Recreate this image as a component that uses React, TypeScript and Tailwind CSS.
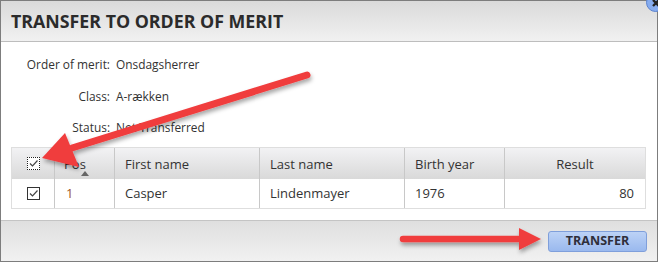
import React from 'react';

const rows = [{ pos: '1', first: 'Casper', last: 'Lindenmayer', year: '1976', result: '80' }];

function Check({ dotted }: { dotted?: boolean }) {
  return (
    <span
      className={
        'relative inline-flex h-[13px] w-[13px] items-center justify-center bg-white ' +
        (dotted ? 'border border-dotted border-[#222]' : 'border border-[#333]')
      }
    >
      <svg width="11" height="11" viewBox="0 0 11 11">
        <path d="M2 5.5 L4.5 8 L9.5 2.5" fill="none" stroke="#444" strokeWidth="1.2" />
      </svg>
    </span>
  );
}

function Arrows() {
  return (
    <svg className="pointer-events-none absolute left-0 top-0" width="658" height="262">
      <defs>
        <filter id="sh" x="-20%" y="-20%" width="140%" height="140%">
          <feDropShadow dx="1" dy="3" stdDeviation="2" floodColor="#000" floodOpacity="0.35" />
        </filter>
      </defs>
      <g filter="url(#sh)" fill="#f03c3e" stroke="#f03c3e">
        <line x1="307" y1="75" x2="72" y2="148" strokeWidth="7" strokeLinecap="round" />
        <polygon points="42,158 65,133 79,167" stroke="none" />
        <line x1="403" y1="239" x2="522" y2="239" strokeWidth="6.5" strokeLinecap="round" />
        <polygon points="541,239 519,228 519,250" stroke="none" />
      </g>
    </svg>
  );
}

export default function App() {
  return (
    <div className="relative h-[262px] w-[658px] overflow-hidden bg-white font-['Open_Sans',sans-serif] text-[#333]">
      <div className="flex h-[262px] w-[658px] flex-col border border-[#7d7d7d]">
        <div className="flex h-[41px] shrink-0 items-center border-b border-[#bdbdbd] bg-gradient-to-b from-[#dadada] to-[#f1f1f1] pl-[10px]">
          <span className="text-[17.8px] font-bold text-[#2b2b2b]">TRANSFER TO ORDER OF MERIT</span>
        </div>
        <div className="flex-1 px-[10px] pt-[13px]">
          <div className="grid grid-cols-[99px_1fr] gap-x-[6px] gap-y-[13.5px] text-[11.9px] leading-[18px]">
            <span className="text-right">Order of merit:</span>
            <span>Onsdagsherrer</span>
            <span className="text-right">Class:</span>
            <span>A-rækken</span>
            <span className="text-right">Status:</span>
            <span>Not Transferred</span>
          </div>
          <div className="mt-[11px] w-[635px] border border-[#dedede] text-[13px]">
            <div className="grid h-[31px] grid-cols-[43px_60px_145px_145px_100px_1fr] bg-gradient-to-b from-[#f2f2f4] to-[#d9d9d9]">
              <div className="flex items-center justify-center border-r border-[#c8c8c8]"><Check dotted /></div>
              <div className="relative flex items-center border-r border-[#c8c8c8] pl-[9px] pt-[2px]">
                Pos
                <span className="absolute left-[26px] top-[23px] h-0 w-0 border-x-[4px] border-b-[5px] border-x-transparent border-b-[#666]" />
              </div>
              <div className="flex items-center border-r border-[#c8c8c8] pl-[10px] pt-[2px]">First name</div>
              <div className="flex items-center border-r border-[#c8c8c8] pl-[10px] pt-[2px]">Last name</div>
              <div className="flex items-center border-r border-[#c8c8c8] pl-[10px] pt-[2px]">Birth year</div>
              <div className="flex items-center justify-center pt-[2px]">Result</div>
            </div>
            {rows.map((r) => (
              <div key={r.pos} className="grid h-[29px] grid-cols-[43px_60px_145px_145px_100px_1fr] bg-white">
                <div className="flex items-center justify-center border-r border-[#c8c8c8]"><Check /></div>
                <div className="flex items-center border-r border-[#c8c8c8] pl-[11px] text-[#a0582a]">{r.pos}</div>
                <div className="flex items-center border-r border-[#c8c8c8] pl-[10px]">{r.first}</div>
                <div className="flex items-center border-r border-[#c8c8c8] pl-[10px]">{r.last}</div>
                <div className="flex items-center border-r border-[#c8c8c8] pl-[10px]">{r.year}</div>
                <div className="flex items-center justify-end pr-[11px]">{r.result}</div>
              </div>
            ))}
          </div>
        </div>
        <div className="flex h-[41px] shrink-0 items-center justify-end border-t border-[#c4c4c4] bg-gradient-to-b from-[#dfdfdf] to-[#f1f1f1] pr-[10px]">
          <button className="h-[21px] w-[99px] rounded-[3px] border border-[#7f9fdb] bg-gradient-to-b from-[#bcd2f6] to-[#9ab9ee] text-[12.5px] font-bold text-[#2f2f3a]">
            TRANSFER
          </button>
        </div>
      </div>
      <div className="absolute right-[-7px] top-[-7px] flex h-[19px] w-[19px] items-center justify-center rounded-full border border-[#5b82cf] bg-[#86acef]">
        <svg width="10" height="10" viewBox="0 0 10 10">
          <path d="M2 2 L8 8 M8 2 L2 8" stroke="#222" strokeWidth="2.4" />
        </svg>
      </div>
      <Arrows />
    </div>
  );
}
